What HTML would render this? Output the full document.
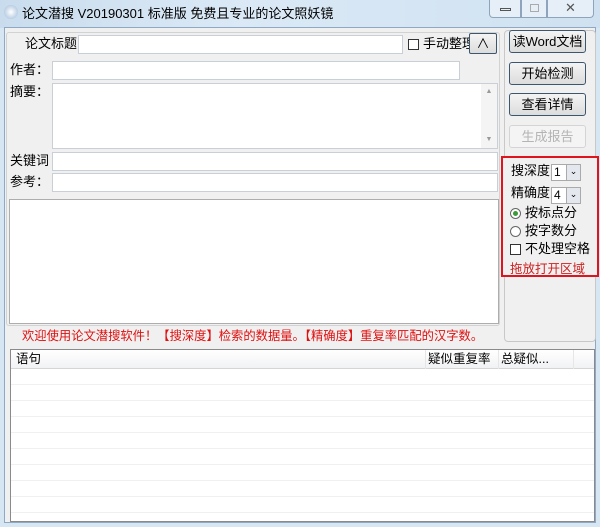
<!DOCTYPE html>
<html><head><meta charset="utf-8"><style>
*{box-sizing:border-box;margin:0;padding:0}
body{width:600px;height:527px;overflow:hidden;background:#d6e6f3;font-family:"Liberation Sans","Noto Sans CJK SC",sans-serif;font-size:12px;line-height:16px;color:#000;position:relative}
.a{position:absolute}
.title{left:0;top:0;width:600px;height:28px;background:linear-gradient(90deg,#c9dced,#dbe9f6 40%,#cfe1f0)}
.client{left:4px;top:27px;width:592px;height:496px;background:#f0f0f0;border:1px solid #8fa9c4}
.inp{background:#fff;border:1px solid #c9cfd6}
.btn{background:linear-gradient(#f4f4f4,#dcdcdc);border:1px solid #3c5670;border-radius:3px;text-align:center;font-size:13px;line-height:21px}
.t{font-size:13px;white-space:nowrap}
</style></head><body>
<div class="a title"></div>
<div class="a" style="left:4px;top:5px;width:14px;height:14px;border-radius:50%;background:radial-gradient(#fff,#9cb9d8);"></div>
<div class="a t" style="left:22px;top:6px">论文潜搜 V20190301 标准版 免费且专业的论文照妖镜</div>
<div class="a" style="left:489px;top:0;width:32px;height:18px;border:1px solid #8ea4bc;border-top:none;border-radius:0 0 0 4px;background:#e6eef7"><div class="a" style="left:10px;top:8px;width:11px;height:3px;border:1px solid #555"></div></div>
<div class="a" style="left:521px;top:0;width:26px;height:18px;border:1px solid #8ea4bc;border-top:none;background:#e6eef7"><div class="a" style="left:8px;top:4px;width:9px;height:8px;border:1px solid #aaa"></div></div>
<div class="a" style="left:547px;top:0;width:47px;height:18px;border:1px solid #8ea4bc;border-top:none;border-radius:0 0 4px 0;background:#e6eef7;text-align:center;font-size:13px;line-height:16px;color:#555">✕</div>
<div class="a client"></div>
<div class="a" style="left:6px;top:32px;width:494px;height:294px;border:1px solid #d2d2d2;border-radius:3px"></div>
<div class="a t" style="left:25px;top:36px">论文标题</div>
<div class="a inp" style="left:78px;top:35px;width:325px;height:19px"></div>
<div class="a" style="left:408px;top:39px;width:11px;height:11px;border:1px solid #333;background:#fff"></div>
<div class="a t" style="left:423px;top:36px;width:46px;overflow:hidden">手动整理</div>
<div class="a btn" style="left:469px;top:33px;width:28px;height:21px;border-radius:2px;line-height:19px">∧</div>
<div class="a t" style="left:10px;top:62px">作者：</div>
<div class="a inp" style="left:52px;top:61px;width:408px;height:19px"></div>
<div class="a t" style="left:10px;top:84px">摘要：</div>
<div class="a inp" style="left:52px;top:83px;width:446px;height:66px"><div class="a" style="right:0;top:0;width:16px;height:64px;background:#f4f4f4;color:#999;font-size:7px;text-align:center;line-height:16px">▲<br><br><br>▼</div></div>
<div class="a t" style="left:10px;top:153px">关键词</div>
<div class="a inp" style="left:52px;top:152px;width:446px;height:19px"></div>
<div class="a t" style="left:10px;top:174px">参考：</div>
<div class="a inp" style="left:52px;top:173px;width:446px;height:19px"></div>
<div class="a inp" style="left:9px;top:199px;width:490px;height:125px;border-color:#adadad"></div>
<div class="a" style="left:22px;top:328px;color:#e01010;font-size:12.3px;white-space:nowrap">欢迎使用论文潜搜软件！【搜深度】检索的数据量。【精确度】重复率匹配的汉字数。</div>
<div class="a" style="left:504px;top:30px;width:92px;height:312px;border:1px solid #c8c8c8;border-radius:4px"></div>
<div class="a btn" style="left:509px;top:30px;width:77px;height:23px">读Word文档</div>
<div class="a btn" style="left:509px;top:62px;width:77px;height:23px">开始检测</div>
<div class="a btn" style="left:509px;top:93px;width:77px;height:23px">查看详情</div>
<div class="a btn" style="left:509px;top:125px;width:77px;height:23px;border-color:#d4d4d4;background:#f4f4f4;color:#b4b4b4">生成报告</div>
<div class="a" style="left:501px;top:156px;width:98px;height:121px;border:2px solid #e0141e;background:#f0f0f0"></div>
<div class="a t" style="left:511px;top:163px">搜深度</div>
<div class="a inp" style="left:551px;top:164px;width:30px;height:17px;font-size:12px;line-height:15px;padding-left:2px;border-color:#aaa">1<div class="a" style="right:0;top:0;width:14px;height:15px;background:#e4e8ee;border-left:1px solid #aaa;font-size:9px;text-align:center;line-height:13px">⌄</div></div>
<div class="a t" style="left:511px;top:185px">精确度</div>
<div class="a inp" style="left:551px;top:187px;width:30px;height:17px;font-size:12px;line-height:15px;padding-left:2px;border-color:#aaa">4<div class="a" style="right:0;top:0;width:14px;height:15px;background:#e4e8ee;border-left:1px solid #aaa;font-size:9px;text-align:center;line-height:13px">⌄</div></div>
<div class="a" style="left:510px;top:208px;width:11px;height:11px;border:1px solid #666;border-radius:50%;background:#fff"><div class="a" style="left:2px;top:2px;width:5px;height:5px;border-radius:50%;background:#3a9a3a"></div></div>
<div class="a t" style="left:525px;top:205px">按标点分</div>
<div class="a" style="left:510px;top:226px;width:11px;height:11px;border:1px solid #666;border-radius:50%;background:#fff"></div>
<div class="a t" style="left:525px;top:223px">按字数分</div>
<div class="a" style="left:510px;top:244px;width:11px;height:11px;border:1px solid #333;background:#fff"></div>
<div class="a t" style="left:525px;top:241px">不处理空格</div>
<div class="a" style="left:510px;top:261px;font-size:12.5px;color:#d02020;white-space:nowrap">拖放打开区域</div>
<div class="a" style="left:10px;top:349px;width:585px;height:173px;border:1px solid #8a8a8a;background:#fff;overflow:hidden">
<div class="a" style="left:0;top:0;width:583px;height:19px;background:linear-gradient(#fff,#f1f2f4);border-bottom:1px solid #d5d5d5"></div>
<div class="a" style="left:5px;top:1px;font-size:12.5px">语句</div>
<div class="a" style="left:417px;top:1px;font-size:12.5px">疑似重复率</div>
<div class="a" style="left:490px;top:1px;font-size:12.5px">总疑似...</div>
<div class="a" style="left:414px;top:0;width:1px;height:172px;background:#e6e6e6"></div>
<div class="a" style="left:487px;top:0;width:1px;height:172px;background:#e6e6e6"></div>
<div class="a" style="left:562px;top:0;width:1px;height:172px;background:#e6e6e6"></div>
<div class="a" style="left:0;top:19px;width:583px;height:153px;background:repeating-linear-gradient(#fff 0 15px,#f0f0f0 15px 16px)"></div>
</div>
</body></html>
